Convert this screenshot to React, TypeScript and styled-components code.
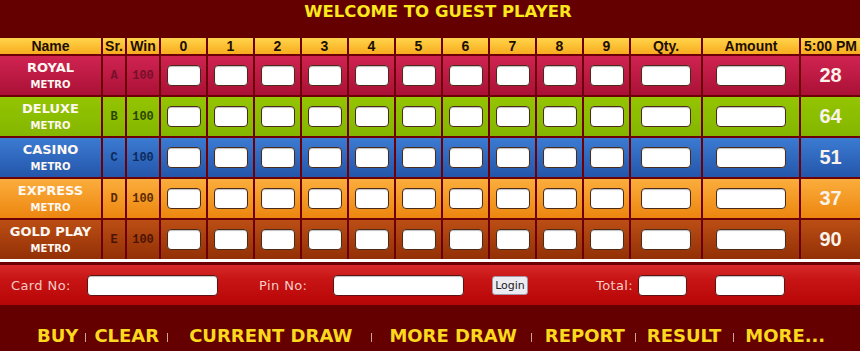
import React from 'react';
import styled, { createGlobalStyle } from 'styled-components';

const GlobalStyle = createGlobalStyle`
  html, body {
    margin: 0;
    padding: 0;
    background: #650000;
  }
  body {
    font-family: "DejaVu Sans", Verdana, sans-serif;
  }
`;

interface Game {
  name: string;
  sr: string;
  result: number;
  top: string;
  bottom: string;
  ink: string;
}

const games: Game[] = [
  { name: 'ROYAL', sr: 'A', result: 28, top: '#d02352', bottom: '#aa1136', ink: '#76102a' },
  { name: 'DELUXE', sr: 'B', result: 64, top: '#93c502', bottom: '#84b600', ink: '#2c4600' },
  { name: 'CASINO', sr: 'C', result: 51, top: '#3b7bd2', bottom: '#2456aa', ink: '#0d2b5e' },
  { name: 'EXPRESS', sr: 'D', result: 37, top: '#fbad3c', bottom: '#ec860f', ink: '#5a2a00' },
  { name: 'GOLD PLAY', sr: 'E', result: 90, top: '#bb4e14', bottom: '#933006', ink: '#4a1400' },
];

const digits = ['0', '1', '2', '3', '4', '5', '6', '7', '8', '9'];

// spacing around each separator is uneven in the original, keep it per item
const menu = [
  { label: 'BUY', sepLeft: 7, sepRight: 8 },
  { label: 'CLEAR', sepLeft: 8, sepRight: 21 },
  { label: 'CURRENT DRAW', sepLeft: 19, sepRight: 17 },
  { label: 'MORE DRAW', sepLeft: 14, sepRight: 13 },
  { label: 'REPORT', sepLeft: 10, sepRight: 11 },
  { label: 'RESULT', sepLeft: 12, sepRight: 11 },
  { label: 'MORE...', sepLeft: 0, sepRight: 0 },
];

const App = () => {
  return (
    <Page>
      <GlobalStyle />
      <Title>WELCOME TO GUEST PLAYER</Title>

      <Board>
        <HeadCell>Name</HeadCell>
        <HeadCell>Sr.</HeadCell>
        <HeadCell>Win</HeadCell>
        {digits.map((d) => (
          <HeadCell key={d}>{d}</HeadCell>
        ))}
        <HeadCell>Qty.</HeadCell>
        <HeadCell>Amount</HeadCell>
        <HeadCell>5:00 PM</HeadCell>

        {games.map((g) => (
          <React.Fragment key={g.sr}>
            <NameCell $top={g.top} $bottom={g.bottom}>
              <GameName>{g.name}</GameName>
              <GameSub>METRO</GameSub>
            </NameCell>
            <Cell $top={g.top} $bottom={g.bottom}>
              <MonoText $ink={g.ink}>{g.sr}</MonoText>
            </Cell>
            <Cell $top={g.top} $bottom={g.bottom}>
              <MonoText $ink={g.ink}>100</MonoText>
            </Cell>
            {digits.map((d) => (
              <Cell key={d} $top={g.top} $bottom={g.bottom}>
                <BetInput $w={34} />
              </Cell>
            ))}
            <Cell $top={g.top} $bottom={g.bottom}>
              <BetInput $w={50} />
            </Cell>
            <Cell $top={g.top} $bottom={g.bottom}>
              <BetInput $w={70} />
            </Cell>
            <Cell $top={g.top} $bottom={g.bottom}>
              <Result>{g.result}</Result>
            </Cell>
          </React.Fragment>
        ))}
      </Board>

      <Divider />

      <LoginBar>
        <FieldLabel $w={76}>Card No:</FieldLabel>
        <FieldInput $w={131} />
        <FieldLabel $w={74} $gap={41}>Pin No:</FieldLabel>
        <FieldInput $w={131} />
        <LoginButton>Login</LoginButton>
        <FieldLabel $w={42} $gap={68}>Total:</FieldLabel>
        <FieldInput $w={49} />
        <FieldInput $w={70} $gap={28} />
      </LoginBar>

      <Menu>
        {menu.map((m, i) => (
          <React.Fragment key={m.label}>
            <MenuItem>{m.label}</MenuItem>
            {i < menu.length - 1 && <MenuSep $l={m.sepLeft} $r={m.sepRight} />}
          </React.Fragment>
        ))}
      </Menu>
    </Page>
  );
};

export default App;

const Page = styled.div`
  width: 860px;
  height: 351px;
  overflow: hidden;
  background: #650000;
`;

const Title = styled.div`
  height: 38px;
  box-sizing: border-box;
  padding: 2px 0 0 16px;
  text-align: center;
  font-family: "DejaVu Sans", Verdana, sans-serif;
  font-weight: bold;
  font-size: 16.5px;
  line-height: 20px;
  color: #fbe81c;
`;

const Board = styled.div`
  display: grid;
  grid-template-columns: 101px 22px 32px repeat(10, 45px) 70px 96px 59px;
  grid-template-rows: 16px;
  grid-auto-rows: 39px;
  gap: 2px;
  background: #6c0006;
`;

const HeadCell = styled.div`
  display: flex;
  align-items: center;
  justify-content: center;
  background: linear-gradient(#ffd44c 0%, #fcc236 45%, #f8ac20 100%);
  font-family: "Liberation Sans", Arial, sans-serif;
  font-weight: bold;
  font-size: 14px;
  line-height: 16px;
  color: #1c0e00;
  white-space: nowrap;
`;

const Cell = styled.div<{ $top: string; $bottom: string }>`
  display: flex;
  align-items: center;
  justify-content: center;
  background: linear-gradient(${(p) => p.$top}, ${(p) => p.$bottom});
`;

const NameCell = styled(Cell)`
  flex-direction: column;
  color: #fff8f2;
  font-family: "DejaVu Sans", Verdana, sans-serif;
  font-weight: bold;
  text-align: center;
`;

const GameName = styled.div`
  font-size: 13px;
  line-height: 16px;
  white-space: nowrap;
`;

const GameSub = styled.div`
  font-size: 10px;
  line-height: 13px;
  margin-top: 2px;
`;

const MonoText = styled.span<{ $ink: string }>`
  font-family: "Liberation Mono", "Courier New", monospace;
  font-weight: bold;
  font-size: 12px;
  color: ${(p) => p.$ink};
`;

const BetInput = styled.input.attrs({ type: 'text' })<{ $w: number }>`
  width: ${(p) => p.$w}px;
  height: 21px;
  box-sizing: border-box;
  margin: 0;
  padding: 0 3px;
  background: #fff;
  border: 1px solid #4a2a18;
  border-radius: 4px;
  box-shadow: inset 0 1px 1px rgba(0, 0, 0, 0.25);
  outline: none;
`;

const Result = styled.span`
  font-family: "Liberation Sans", Arial, sans-serif;
  font-weight: bold;
  font-size: 20px;
  color: #fbf3ea;
`;

const Divider = styled.div`
  height: 3px;
  background: #ffffff;
  border-bottom: 3px solid #6c0006;
`;

const LoginBar = styled.div`
  height: 40px;
  box-sizing: border-box;
  padding-left: 11px;
  display: flex;
  align-items: center;
  background: linear-gradient(#d62a2a 0%, #c81414 35%, #b70606 100%);
`;

const FieldLabel = styled.span<{ $w: number; $gap?: number }>`
  width: ${(p) => p.$w}px;
  margin-left: ${(p) => p.$gap ?? 0}px;
  flex: none;
  font-family: "DejaVu Sans", Verdana, sans-serif;
  font-size: 13px;
  letter-spacing: 0.4px;
  color: #f6cdc6;
  white-space: nowrap;
`;

const FieldInput = styled.input.attrs({ type: 'text' })<{ $w: number; $gap?: number }>`
  width: ${(p) => p.$w}px;
  height: 21px;
  box-sizing: border-box;
  margin: 0 0 0 ${(p) => p.$gap ?? 0}px;
  flex: none;
  background: #fff;
  border: 1px solid #5a1414;
  border-radius: 4px;
  box-shadow: inset 0 1px 1px rgba(0, 0, 0, 0.25);
  outline: none;
`;

const LoginButton = styled.button`
  width: 36px;
  height: 19px;
  margin-left: 28px;
  padding: 0;
  flex: none;
  background: #ecebf2;
  border: 1px solid #a09aa8;
  border-radius: 3px;
  font-family: "DejaVu Sans", Verdana, sans-serif;
  font-size: 11px;
  color: #222;
`;

const Menu = styled.div`
  height: 46px;
  box-sizing: border-box;
  padding: 16px 0 0 37px;
  display: flex;
  align-items: center;
`;

const MenuItem = styled.span`
  font-family: "DejaVu Sans", Verdana, sans-serif;
  font-weight: bold;
  font-size: 18px;
  line-height: 22px;
  color: #fcd81e;
  white-space: nowrap;
`;

const MenuSep = styled.span<{ $l: number; $r: number }>`
  display: inline-block;
  width: 1px;
  height: 9px;
  margin: 3px ${(p) => p.$r}px 0 ${(p) => p.$l}px;
  background: #c9a49a;
`;
